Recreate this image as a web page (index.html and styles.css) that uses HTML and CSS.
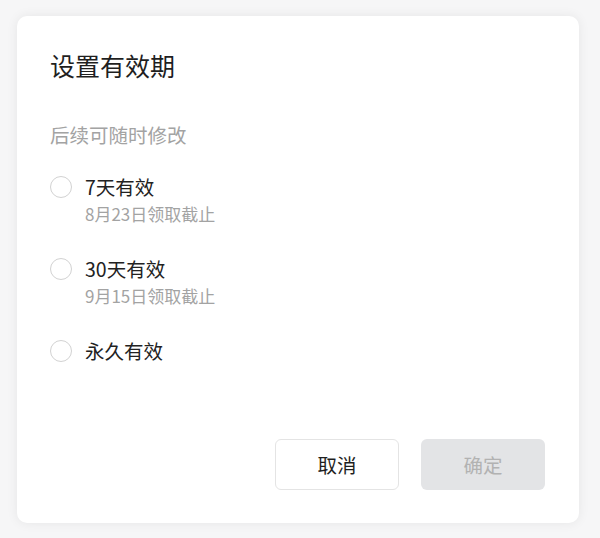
FILE: index.html
```html
<!DOCTYPE html>
<html lang="zh-CN">
<head>
<meta charset="utf-8">
<title>设置有效期</title>
<link rel="stylesheet" href="styles.css">
</head>
<body>
<div class="dialog">
  <h1 class="title">设置有效期</h1>
  <p class="hint">后续可随时修改</p>
  <div class="options">
    <label class="option">
      <span class="radio"></span>
      <span class="option-text">
        <span class="option-label">7天有效</span>
        <span class="option-sub">8月23日领取截止</span>
      </span>
    </label>
    <label class="option">
      <span class="radio"></span>
      <span class="option-text">
        <span class="option-label">30天有效</span>
        <span class="option-sub">9月15日领取截止</span>
      </span>
    </label>
    <label class="option">
      <span class="radio"></span>
      <span class="option-text">
        <span class="option-label">永久有效</span>
      </span>
    </label>
  </div>
  <div class="footer">
    <button class="btn btn-cancel">取消</button>
    <button class="btn btn-confirm" disabled>确定</button>
  </div>
</div>
</body>
</html>
```

FILE: styles.css
```css
html, body {
  margin: 0;
  height: 100%;
}
body {
  background: #f6f6f7;
  font-family: "Noto Sans CJK SC", "Noto Sans", sans-serif;
  padding: 16px 0 0 17px;
  box-sizing: border-box;
}
.dialog {
  width: 562px;
  height: 507px;
  box-sizing: border-box;
  background: #ffffff;
  border-radius: 10px;
  box-shadow: 0 0 12px rgba(0, 0, 0, 0.07);
  padding: 32px 34px 33px 33px;
  display: flex;
  flex-direction: column;
}
.title {
  margin: 0;
  font-size: 25px;
  line-height: 34px;
  font-weight: 400;
  color: #1f1f1f;
}
.hint {
  margin: 40px 0 0;
  font-size: 19.5px;
  line-height: 26px;
  color: #a3a3a3;
}
.options {
  margin-top: 26px;
  display: flex;
  flex-direction: column;
  gap: 30px;
}
.option {
  display: flex;
  align-items: flex-start;
  gap: 13px;
}
.radio {
  width: 22px;
  height: 22px;
  box-sizing: border-box;
  border: 1.5px solid #d2d2d2;
  border-radius: 50%;
  margin-top: 2px;
  flex: none;
}
.option-text {
  display: flex;
  flex-direction: column;
  gap: 2px;
}
.option-label {
  font-size: 19.5px;
  line-height: 26px;
  color: #222222;
}
.option-sub {
  font-size: 17px;
  line-height: 24px;
  color: #a3a3a3;
}
.footer {
  margin-top: auto;
  display: flex;
  justify-content: flex-end;
  gap: 22px;
}
.btn {
  width: 124px;
  height: 51px;
  box-sizing: border-box;
  border-radius: 6px;
  font-family: inherit;
  font-size: 19.5px;
  padding: 0;
}
.btn-cancel {
  background: #ffffff;
  border: 1px solid #e4e4e4;
  color: #1f1f1f;
}
.btn-confirm {
  background: #e3e4e6;
  border: none;
  color: #b2b2b2;
}
```
